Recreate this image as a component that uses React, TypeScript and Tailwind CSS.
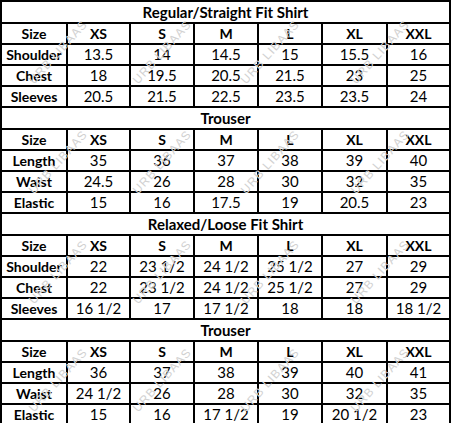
const sizes = ["XS", "S", "M", "L", "XL", "XXL"]

type Section = {
  title: string
  rows: [string, string[]][]
}

const sections: Section[] = [
  {
    title: "Regular/Straight Fit Shirt",
    rows: [
      ["Shoulder", ["13.5", "14", "14.5", "15", "15.5", "16"]],
      ["Chest", ["18", "19.5", "20.5", "21.5", "23", "25"]],
      ["Sleeves", ["20.5", "21.5", "22.5", "23.5", "23.5", "24"]],
    ],
  },
  {
    title: "Trouser",
    rows: [
      ["Length", ["35", "36", "37", "38", "39", "40"]],
      ["Waist", ["24.5", "26", "28", "30", "32", "35"]],
      ["Elastic", ["15", "16", "17.5", "19", "20.5", "23"]],
    ],
  },
  {
    title: "Relaxed/Loose Fit Shirt",
    rows: [
      ["Shoulder", ["22", "23 1/2", "24 1/2", "25 1/2", "27", "29"]],
      ["Chest", ["22", "23 1/2", "24 1/2", "25 1/2", "27", "29"]],
      ["Sleeves", ["16 1/2", "17", "17 1/2", "18", "18", "18 1/2"]],
    ],
  },
  {
    title: "Trouser",
    rows: [
      ["Length", ["36", "37", "38", "39", "40", "41"]],
      ["Waist", ["24 1/2", "26", "28", "30", "32", "35"]],
      ["Elastic", ["15", "16", "17 1/2", "19", "20 1/2", "23"]],
    ],
  },
]

// watermark centres, repeated over the chart
const marksX = [58, 162, 270, 380]
const marksY = [52, 162, 272, 380]

function Cell({ children, bold }: { children: React.ReactNode; bold?: boolean }) {
  return (
    <div
      className={
        "bg-white h-[19px] flex items-center justify-center leading-none " +
        (bold ? "font-bold text-[14px]" : "font-normal text-[15px]")
      }
    >
      {children}
    </div>
  )
}

export default function App() {
  return (
    <div className="relative w-[451px] h-[423px] bg-white overflow-hidden font-['Lato','Liberation_Sans',sans-serif] text-black">
      <div className="border-2 border-black bg-black flex flex-col gap-[2px]">
        {sections.map((section, i) => (
          <div
            key={i}
            className="grid grid-cols-[64px_61px_62px_62px_62px_63px_1fr] gap-[2px]"
          >
            <div className="col-span-7 bg-white h-[20px] flex items-center justify-center font-bold text-[15px] leading-none">
              {section.title}
            </div>
            <Cell bold>Size</Cell>
            {sizes.map((s) => (
              <Cell key={s} bold>
                {s}
              </Cell>
            ))}
            {section.rows.map(([label, values]) => (
              <div key={label} className="contents">
                <Cell bold>{label}</Cell>
                {values.map((v, j) => (
                  <Cell key={j}>{v}</Cell>
                ))}
              </div>
            ))}
          </div>
        ))}
      </div>

      {marksY.map((y) =>
        marksX.map((x) => (
          <div
            key={`${x}-${y}`}
            className="absolute pointer-events-none select-none whitespace-nowrap text-[12px] tracking-[1px] text-[#d2d2d2] -rotate-[48deg] -translate-x-1/2 -translate-y-1/2 font-['Liberation_Sans',sans-serif]"
            style={{ left: x, top: y }}
          >
            URB LIBAAS
          </div>
        ))
      )}
    </div>
  )
}
